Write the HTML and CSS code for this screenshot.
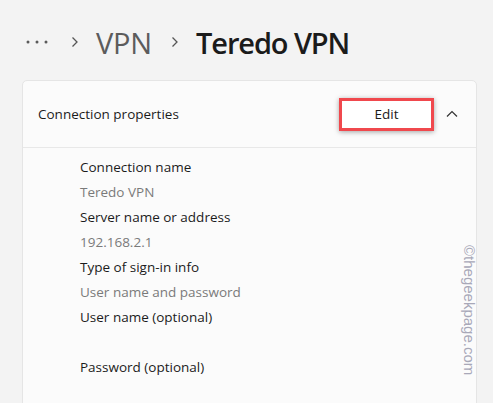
FILE: index.html
```html
<!DOCTYPE html>
<html>
<head>
<meta charset="utf-8">
<link rel="stylesheet" href="styles.css">
</head>
<body>
<div class="page">
  <div class="crumbs">
    <svg class="dots" width="24" height="6" viewBox="0 0 24 6"><circle cx="3" cy="3" r="1.5"/><circle cx="12" cy="3" r="1.5"/><circle cx="21" cy="3" r="1.5"/></svg>
    <svg class="chev" width="8" height="12" viewBox="0 0 8 12"><path d="M1.5 1.5 L6 6 L1.5 10.5"/></svg>
    <span class="crumb">VPN</span>
    <svg class="chev" width="8" height="12" viewBox="0 0 8 12"><path d="M1.5 1.5 L6 6 L1.5 10.5"/></svg>
    <span class="crumb current">Teredo VPN</span>
  </div>
  <div class="card">
    <div class="card-head">
      <span class="head-title">Connection properties</span>
      <div class="edit-wrap"><button class="edit">Edit</button></div>
      <svg class="up" width="12" height="8" viewBox="0 0 12 8"><path d="M1 6.5 L6 1.5 L11 6.5"/></svg>
    </div>
    <div class="card-body">
      <div class="label">Connection name</div>
      <div class="value">Teredo VPN</div>
      <div class="label">Server name or address</div>
      <div class="value">192.168.2.1</div>
      <div class="label">Type of sign-in info</div>
      <div class="value">User name and password</div>
      <div class="label">User name (optional)</div>
      <div class="value"></div>
      <div class="label">Password (optional)</div>
    </div>
  </div>
  <div class="watermark">©thegeekpage.com</div>
</div>
</body>
</html>
```
FILE: styles.css
```css
html, body {
  margin: 0;
  padding: 0;
  background: #f3f3f3;
  width: 493px;
  height: 403px;
  overflow: hidden;
  font-family: "Open Sans", "Noto Sans", sans-serif;
  color: #1b1b1b;
}
.page {
  position: relative;
  padding: 26px 16px 0 22px;
  height: 403px;
  box-sizing: border-box;
}
.crumbs {
  display: flex;
  align-items: center;
  height: 32px;
  padding-left: 3px;
}
.dots { fill: #5a5a5a; margin-right: 22px; }
.chev { fill: none; stroke: #555; stroke-width: 1.3; margin-right: 17px; }
.crumb {
  font-size: 29px;
  font-weight: 500;
  color: #5c5c5c;
  margin-right: 19px;
  letter-spacing: -0.2px;
}
.crumb.current { color: #1b1b1b; font-weight: 600; letter-spacing: -1.1px; }
.card {
  margin-top: 22px;
  background: #fbfbfb;
  border: 1px solid #e5e5e5;
  border-radius: 5px;
  height: 340px;
}
.card-head {
  display: flex;
  align-items: center;
  height: 66px;
  padding: 0 18px 0 15px;
  border-bottom: 1px solid #e8e8e8;
}
.head-title { font-size: 13.5px; flex: 1; color: #1b1b1b; }
.edit-wrap {
  border: 3px solid #f0484d;
  box-shadow: 0 1px 5px rgba(0,0,0,0.35);
  margin-right: 12px;
}
.edit {
  display: block;
  width: 89px;
  height: 27px;
  border: none;
  background: #fff;
  font-family: inherit;
  font-size: 13.5px;
  color: #1b1b1b;
  padding: 0;
}
.up { fill: none; stroke: #333; stroke-width: 1.2; }
.card-body {
  padding: 7px 0 0 57px;
  font-size: 13.5px;
}
.label, .value { height: 25px; line-height: 25px; }
.value { color: #7a7a7a; }
.watermark {
  position: absolute;
  left: 478px;
  top: 245px;
  transform-origin: 0 0;
  transform: rotate(90deg);
  font-family: "Liberation Sans", Arial, sans-serif;
  font-size: 15px;
  color: #a8a8b8;
  white-space: nowrap;
}
```
